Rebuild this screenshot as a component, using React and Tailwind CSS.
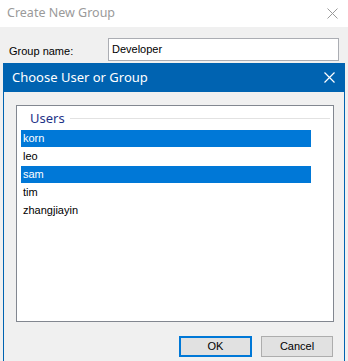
export default function App() {
  const users = [
    { name: "korn", sel: true },
    { name: "leo", sel: false },
    { name: "sam", sel: true },
    { name: "tim", sel: false },
    { name: "zhangjiayin", sel: false },
  ];
  return (
    <div className="relative w-[348px] h-[361px] overflow-hidden bg-[#f0f0f0] font-['Liberation_Sans',Arial,sans-serif]">
      {/* outer window title */}
      <div className="h-[27px] bg-white flex items-center justify-between pl-[7px] pr-[10px]">
        <span className="text-[12.5px] text-[#9a9a9a] font-['Noto_Sans',sans-serif] leading-none">Create New Group</span>
        <svg width="11" height="11" viewBox="0 0 11 11">
          <path d="M0.5 0.5 L10.5 10.5 M10.5 0.5 L0.5 10.5" stroke="#9a9a9a" strokeWidth="1" fill="none" />
        </svg>
      </div>
      {/* group name row */}
      <div className="flex items-center pt-[11px] pl-[9px]">
        <span className="text-[11px] text-black w-[99px] mt-[3px]">Group name:</span>
        <div className="w-[231px] h-[23px] bg-white border border-[#abadb3] flex items-center pl-[3px] text-[11px] text-black">
          Developer
        </div>
      </div>

      {/* overlay dialog */}
      <div className="absolute left-[3px] top-[63px] w-[342px] h-[320px] flex flex-col">
        <div className="h-[29px] bg-[#0063b1] flex items-center justify-between pl-[9px] pr-[10px] shrink-0">
          <span className="text-[13px] text-white font-['Noto_Sans',sans-serif] leading-none">Choose User or Group</span>
          <svg width="11" height="11" viewBox="0 0 11 11">
            <path d="M0.5 0.5 L10.5 10.5 M10.5 0.5 L0.5 10.5" stroke="#ffffff" strokeWidth="1.2" fill="none" />
          </svg>
        </div>
        <div className="flex-1 bg-[#f0f0f0] border-x border-[#0063b1] pt-[13px] pl-[12px] pr-[10px]">
          <div className="w-[318px] h-[217px] bg-white border border-[#828790] pt-[5px] pl-[4px]">
            <div className="flex items-center h-[14px]">
              <span className="ml-[9px] text-[13px] text-[#1e3287] font-['Noto_Sans',sans-serif] leading-none">Users</span>
              <div className="ml-[5px] w-[260px] h-px bg-[#e2e2e2]" />
            </div>
            <div className="mt-[5px] flex flex-col gap-[1px]">
              {users.map((u) => (
                <div
                  key={u.name}
                  className={
                    u.sel
                      ? "w-[290px] h-[17px] bg-[#0078d7] text-white text-[11px] flex items-center pl-[2px]"
                      : "w-[290px] h-[17px] text-black text-[11px] flex items-center pl-[2px]"
                  }
                >
                  {u.name}
                </div>
              ))}
            </div>
          </div>
          <div className="mt-[14px] flex justify-end gap-[9px] pr-[1px]">
            <button className="w-[73px] h-[21px] bg-[#e1e1e1] border-2 border-[#0078d7] text-[11px] text-black flex items-center justify-center">OK</button>
            <button className="w-[72px] h-[21px] bg-[#e1e1e1] border border-[#adadad] text-[11px] text-black flex items-center justify-center">Cancel</button>
          </div>
        </div>
      </div>
    </div>
  );
}
